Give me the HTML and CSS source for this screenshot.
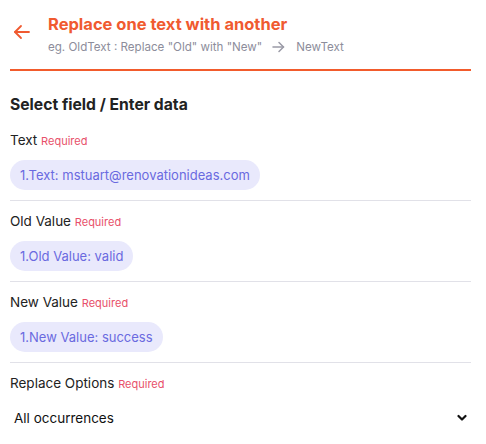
FILE: index.html
```html
<!DOCTYPE html>
<html lang="en">
<head>
    <meta charset="UTF-8">
    <meta name="viewport" content="width=device-width, initial-scale=1.0">
    <title>Replace one text with another</title>
    <link rel="stylesheet" href="styles.css">
</head>
<body>
    <div class="panel">
        <div class="header">
            <button class="back-btn" aria-label="Back">
                <svg width="18" height="18" viewBox="0 0 18 18" fill="none" stroke="#f05a30" stroke-width="1.8" stroke-linecap="round" stroke-linejoin="round">
                    <path d="M16 9H2"/>
                    <path d="M8 3L2 9l6 6"/>
                </svg>
            </button>
            <div class="header-text">
                <h1>Replace one text with another</h1>
                <p class="hint">eg. OldText : Replace "Old" with "New"
                    <svg class="hint-arrow" width="13" height="12" viewBox="0 0 13 12" fill="none" stroke="#9a9aa6" stroke-width="1.5" stroke-linecap="round" stroke-linejoin="round">
                        <path d="M1 6h10.5"/>
                        <path d="M7 1.5L11.5 6 7 10.5"/>
                    </svg>
                    NewText</p>
            </div>
        </div>
        <div class="header-line"></div>

        <h2>Select field / Enter data</h2>

        <div class="field first">
            <label>Text <span class="req">Required</span></label>
            <span class="chip">1.Text: mstuart@renovationideas.com</span>
        </div>

        <div class="field">
            <label>Old Value <span class="req">Required</span></label>
            <span class="chip">1.Old Value: valid</span>
        </div>

        <div class="field">
            <label>New Value <span class="req">Required</span></label>
            <span class="chip">1.New Value: success</span>
        </div>

        <div class="field last">
            <label>Replace Options <span class="req">Required</span></label>
            <div class="select">
                <span>All occurrences</span>
                <svg width="10" height="8" viewBox="0 0 10 8" fill="none" stroke="#111" stroke-width="2.2" stroke-linecap="round" stroke-linejoin="round">
                    <path d="M1.5 2l3.5 3.5L8.5 2"/>
                </svg>
            </div>
        </div>
    </div>
</body>
</html>
```

FILE: styles.css
```css
body {
    margin: 0;
    font-family: "Inter", "Noto Sans", sans-serif;
    color: #222;
    background: #fff;
}

.panel {
    padding: 0 15px 0 10px;
}

.header {
    display: flex;
    align-items: flex-start;
    gap: 17px;
    padding-top: 14px;
    padding-bottom: 14px;
}

.header-line {
    height: 2px;
    background-color: #f25b2c;
}

.back-btn {
    border: none;
    background: none;
    padding: 0;
    margin: 9px 0 0 3px;
    cursor: pointer;
    display: flex;
}

.header-text h1 {
    margin: 0;
    font-size: 16.5px;
    font-weight: 700;
    color: #f05a30;
    line-height: 20px;
}

.hint {
    margin: 5px 0 0;
    font-size: 11.6px;
    color: #8d8d9b;
    line-height: 16px;
    display: flex;
    align-items: center;
}

.hint-arrow {
    margin: 0 11px 0 10px;
}

h2 {
    margin: 24px 0 0;
    font-size: 15.7px;
    font-weight: 700;
    color: #222;
    line-height: 20px;
}

.field {
    border-bottom: 1px solid #e1e1e8;
    padding-top: 11px;
    padding-bottom: 10px;
}

.field.first {
    padding-top: 16px;
}

.field label {
    display: block;
    font-size: 13.5px;
    color: #222;
    line-height: 18px;
}

.req {
    font-size: 11px;
    color: #e8506a;
}

.chip {
    display: inline-block;
    margin-top: 10px;
    padding: 0 10px;
    height: 30px;
    line-height: 30px;
    border-radius: 15px;
    background: #e9e9fc;
    color: #6a6ae0;
    font-size: 13px;
}

.select {
    display: flex;
    align-items: center;
    justify-content: space-between;
    margin-top: 13px;
    padding: 0 4px;
    height: 24px;
    font-size: 13.5px;
    color: #111;
}

.field.last {
    padding-bottom: 14px;
}
```
